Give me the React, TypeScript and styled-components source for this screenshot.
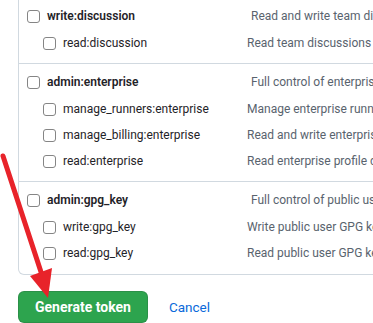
import styled, { createGlobalStyle } from "styled-components";

const GlobalStyle = createGlobalStyle`
  body {
    margin: 0;
    background: #ffffff;
    font-family: Roboto, "Liberation Sans", Arial, sans-serif;
    overflow: hidden;
  }
`;

const Page = styled.div`
  position: relative;
  width: 373px;
  height: 323px;
  overflow: hidden;
  padding-left: 18px;
  box-sizing: border-box;
`;

const ScopeBox = styled.div`
  width: 640px;
  border: 1px solid #d1d9e0;
  border-top: none;
  border-radius: 0 0 6px 6px;
`;

const ScopeGroup = styled.div`
  padding: 5px 0 7px 8px;
  border-bottom: 1px solid #d1d9e0;

  &:first-child {
    padding-top: 3px;
  }

  &:last-child {
    border-bottom: none;
    padding-bottom: 8px;
  }
`;

const ScopeRow = styled.div<{ $child?: boolean }>`
  display: grid;
  grid-template-columns: ${(p) => (p.$child ? "204px" : "224px")} 1fr;
  align-items: center;
  height: 26px;
  padding-left: ${(p) => (p.$child ? "16px" : "0")};
`;

const ChildList = styled.div`
  margin-top: 1px;
`;

const ScopeLabel = styled.label<{ $parent?: boolean }>`
  display: flex;
  align-items: center;
  gap: 7px;
  font-size: 12px;
  font-weight: ${(p) => (p.$parent ? 600 : 400)};
  color: #1f2328;
  white-space: nowrap;
`;

const Checkbox = styled.input.attrs({ type: "checkbox" })`
  appearance: none;
  margin: 0;
  width: 13px;
  height: 13px;
  border: 1px solid #858585;
  border-radius: 3px;
  background: #ffffff;
  box-sizing: border-box;
  flex-shrink: 0;
`;

const ScopeDesc = styled.span`
  font-size: 12px;
  color: #59636e;
  white-space: nowrap;
`;

const Footer = styled.div`
  display: flex;
  align-items: center;
  gap: 21px;
  padding-top: 16px;
`;

const GenerateButton = styled.button`
  height: 32px;
  padding: 0 16px;
  background: #2da44e;
  border: 1px solid rgba(31, 35, 40, 0.15);
  border-radius: 6px;
  color: #ffffff;
  font-family: inherit;
  font-size: 14px;
  font-weight: 700;
`;

const CancelLink = styled.a`
  font-size: 13.5px;
  color: #0969da;
  text-decoration: none;
`;

const Arrow = styled.svg`
  position: absolute;
  left: 0;
  top: 0;
  pointer-events: none;
`;

type scope = {
  name: string;
  description: string;
  children: { name: string; description: string }[];
};

const scopes: scope[] = [
  {
    name: "write:discussion",
    description: "Read and write team discussions",
    children: [{ name: "read:discussion", description: "Read team discussions" }],
  },
  {
    name: "admin:enterprise",
    description: "Full control of enterprises",
    children: [
      { name: "manage_runners:enterprise", description: "Manage enterprise runners and runner groups" },
      { name: "manage_billing:enterprise", description: "Read and write enterprise billing data" },
      { name: "read:enterprise", description: "Read enterprise profile data" },
    ],
  },
  {
    name: "admin:gpg_key",
    description: "Full control of public user GPG keys",
    children: [
      { name: "write:gpg_key", description: "Write public user GPG keys" },
      { name: "read:gpg_key", description: "Read public user GPG keys" },
    ],
  },
];

const App = () => {
  return (
    <Page>
      <GlobalStyle />
      <ScopeBox>
        {scopes.map((group) => (
          <ScopeGroup key={group.name}>
            <ScopeRow>
              <ScopeLabel $parent>
                <Checkbox />
                {group.name}
              </ScopeLabel>
              <ScopeDesc>{group.description}</ScopeDesc>
            </ScopeRow>
            <ChildList>
              {group.children.map((child) => (
                <ScopeRow $child key={child.name}>
                  <ScopeLabel>
                    <Checkbox />
                    {child.name}
                  </ScopeLabel>
                  <ScopeDesc>{child.description}</ScopeDesc>
                </ScopeRow>
              ))}
            </ChildList>
          </ScopeGroup>
        ))}
      </ScopeBox>
      <Footer>
        <GenerateButton>Generate token</GenerateButton>
        <CancelLink href="#">Cancel</CancelLink>
      </Footer>
      <Arrow width="373" height="323" viewBox="0 0 373 323">
        <line x1="3" y1="156" x2="41" y2="272" stroke="#e8232a" strokeWidth="5" strokeLinecap="round" />
        <polygon points="30,276 52,268 48,298" fill="#e8232a" />
      </Arrow>
    </Page>
  );
};

export default App;
